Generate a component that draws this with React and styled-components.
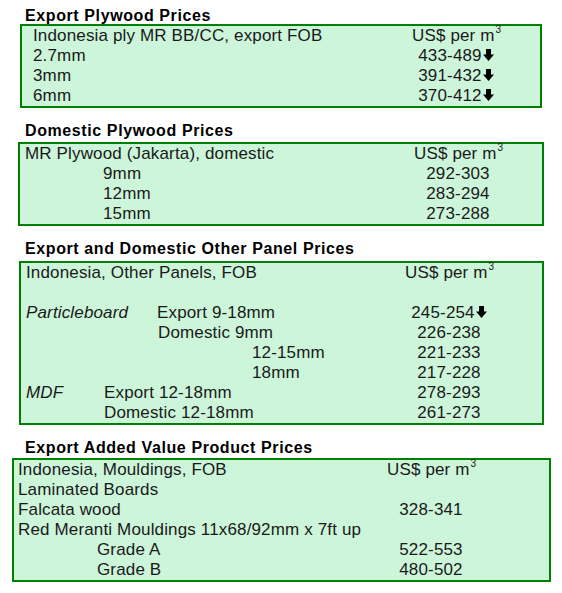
import React from "react"
import styled, { createGlobalStyle } from "styled-components"

const GlobalStyle = createGlobalStyle`
  body {
    margin: 0;
    background: #ffffff;
    font-family: "Liberation Sans", Arial, sans-serif;
    color: #1a1a1a;
  }
`

const sections = [
  {
    title: "Export Plywood Prices",
    top: 7,
    gap: 0,
    left: 20,
    width: 522,
    pad: 11,
    labelW: 379,
    rows: [
      { label: "Indonesia ply MR BB/CC, export FOB", header: true },
      { label: "2.7mm", price: "433-489", down: true },
      { label: "3mm", price: "391-432", down: true },
      { label: "6mm", price: "370-412", down: true },
    ],
  },
  {
    title: "Domestic Plywood Prices",
    top: 14,
    gap: 3,
    left: 18,
    width: 526,
    pad: 5,
    labelW: 389,
    rows: [
      { label: "MR Plywood (Jakarta), domestic", header: true },
      { label: "9mm", indent: 78, price: "292-303" },
      { label: "12mm", indent: 78, price: "283-294" },
      { label: "15mm", indent: 78, price: "273-288" },
    ],
  },
  {
    title: "Export and Domestic Other Panel Prices",
    top: 14,
    gap: 4,
    left: 19,
    width: 525,
    pad: 5,
    labelW: 379,
    rows: [
      { label: "Indonesia, Other Panels, FOB", header: true },
      { label: "" },
      { tag: "Particleboard", tagW: 131, label: "Export 9-18mm", price: "245-254", down: true },
      { label: "Domestic 9mm", indent: 132, price: "226-238" },
      { label: "12-15mm", indent: 226, price: "221-233" },
      { label: "18mm", indent: 226, price: "217-228" },
      { tag: "MDF", tagW: 78, label: "Export 12-18mm", price: "278-293" },
      { label: "Domestic 12-18mm", indent: 78, price: "261-273" },
    ],
  },
  {
    title: "Export Added Value Product Prices",
    top: 14,
    gap: 2,
    left: 12,
    width: 539,
    pad: 4,
    labelW: 369,
    rows: [
      { label: "Indonesia, Mouldings, FOB", header: true },
      { label: "Laminated Boards" },
      { label: "Falcata wood", price: "328-341" },
      { label: "Red Meranti Mouldings 11x68/92mm x 7ft up" },
      { label: "Grade A", indent: 79, price: "522-553" },
      { label: "Grade B", indent: 79, price: "480-502" },
    ],
  },
]

const DownArrow = () => (
  <ArrowSvg width="11" height="12" viewBox="0 0 11 12">
    <rect x="3" y="0" width="5" height="6" fill="#000" />
    <polygon points="0,5.5 11,5.5 5.5,12" fill="#000" />
  </ArrowSvg>
)

export default function App() {
  return (
    <Page>
      <GlobalStyle />
      {sections.map((s) => (
        <Section key={s.title} $top={s.top}>
          <Title $gap={s.gap}>{s.title}</Title>
          <Box $left={s.left} $width={s.width} $pad={s.pad}>
            {s.rows.map((r, i) => (
              <Row key={i}>
                <Label $w={s.labelW} $indent={r.indent || 0}>
                  {r.tag && <Tag $w={r.tagW}>{r.tag}</Tag>}
                  {r.label}
                </Label>
                <Price>
                  {r.header ? (
                    <>
                      US$ per m<Sup>3</Sup>
                    </>
                  ) : (
                    r.price
                  )}
                  {r.down && <DownArrow />}
                </Price>
              </Row>
            ))}
          </Box>
        </Section>
      ))}
    </Page>
  )
}

const Page = styled.div`
  display: flex;
  flex-direction: column;
  width: 562px;
  padding-bottom: 10px;
`

const Section = styled.section`
  display: flex;
  flex-direction: column;
  margin-top: ${(p) => p.$top}px;
`

const Title = styled.h2`
  margin: 0 0 ${(p) => p.$gap}px 0;
  padding-left: 25px;
  font-size: 16px;
  letter-spacing: 0.6px;
  line-height: 17px;
  font-weight: 700;
  color: #000;
  white-space: nowrap;
`

const Box = styled.div`
  margin-left: ${(p) => p.$left}px;
  width: ${(p) => p.$width}px;
  box-sizing: border-box;
  border: 2px solid #008000;
  background: #ccf5d9;
  padding-left: ${(p) => p.$pad}px;
  display: flex;
  flex-direction: column;
`

const Row = styled.div`
  display: flex;
  height: 20px;
  align-items: center;
  font-size: 17px;
  letter-spacing: 0.15px;
  line-height: 20px;
  white-space: nowrap;
`

const Label = styled.div`
  flex: 0 0 ${(p) => p.$w}px;
  padding-left: ${(p) => p.$indent}px;
  box-sizing: border-box;
  display: flex;
`

const Tag = styled.span`
  display: inline-block;
  width: ${(p) => p.$w}px;
  font-style: italic;
`

const Price = styled.div`
  flex: 0 0 88px;
  display: flex;
  justify-content: center;
  align-items: center;
`

const Sup = styled.span`
  font-size: 10px;
  line-height: 0;
  align-self: flex-start;
  margin-left: 1px;
  position: relative;
  top: 4px;
`

const ArrowSvg = styled.svg`
  margin-left: 1px;
  position: relative;
  top: -1px;
`
